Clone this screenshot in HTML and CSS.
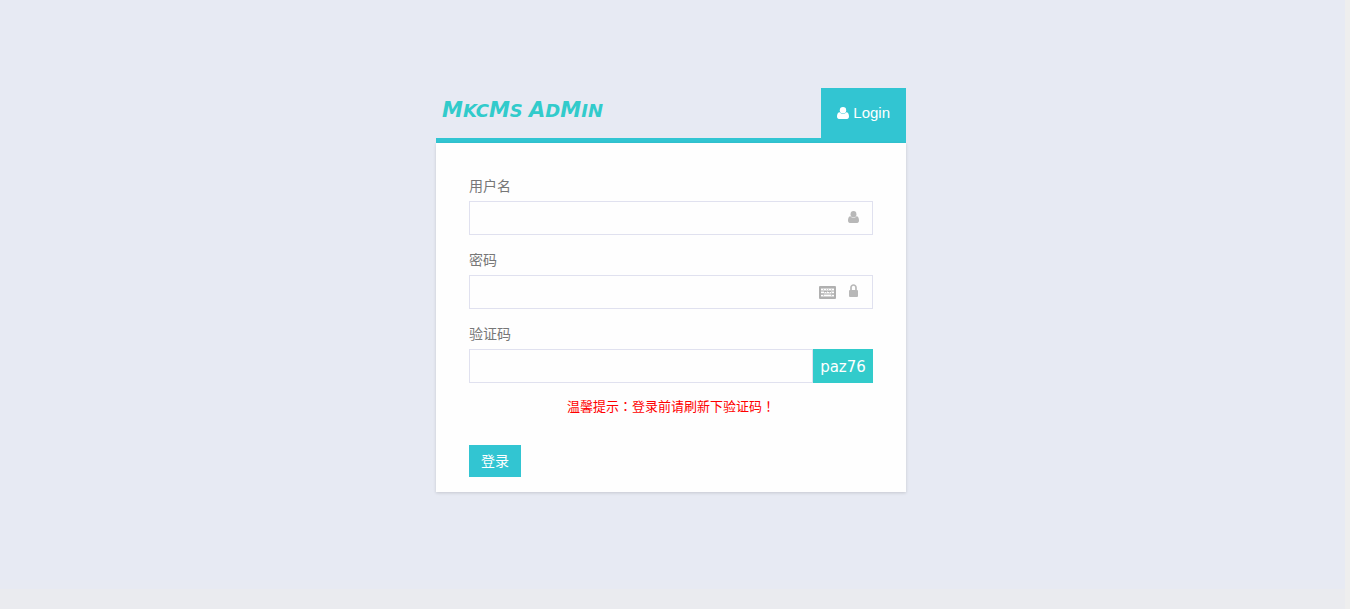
FILE: index.html
```
<!DOCTYPE html>
<html lang="zh-CN">
<head>
  <meta charset="UTF-8" />
  <meta name="viewport" content="width=device-width, initial-scale=1.0" />
  <title>MKCMS Admin</title>
  <link rel="stylesheet" href="styles.css">
</head>
<body>
  <div class="page">
    <main class="login">
      <header class="login-header">
        <h1 class="logo"><span class="tall">M</span>KC<span class="tall">M</span>S <span class="tall">A</span>D<span class="tall">M</span>IN</h1>
        <a class="tab" href="#login">
          <svg class="tab-icon" viewBox="0 0 12 12" fill="currentColor" aria-hidden="true"><circle cx="6" cy="3.200" r="3.200"/><path d="M2.800 5.200C.8 5.200 0 7.300 0 9.600 0 11.200.8 12 2 12h8c1.200 0 2-.8 2-2.400 0-2.300-.8-4.400-2.800-4.400C8.400 6.300 7.200 6.900 6 6.900S3.600 6.300 2.800 5.200z"/></svg>
          Login
        </a>
      </header>

      <form class="login-body" id="login">
        <div class="field">
          <label for="username">用户名</label>
          <div class="control">
            <input type="text" id="username" name="username" />
            <svg class="icon icon-user" viewBox="0 0 12 12" preserveAspectRatio="none" fill="currentColor" aria-hidden="true"><circle cx="6" cy="3.200" r="3.200"/><path d="M2.800 5.200C.8 5.200 0 7.300 0 9.600 0 11.200.8 12 2 12h8c1.200 0 2-.8 2-2.400 0-2.300-.8-4.400-2.800-4.400C8.400 6.300 7.200 6.900 6 6.900S3.600 6.300 2.800 5.200z"/></svg>
          </div>
        </div>

        <div class="field">
          <label for="password">密码</label>
          <div class="control">
            <input type="password" id="password" name="password" />
            <svg class="icon icon-keyboard" viewBox="0 0 17 13" aria-hidden="true">
              <rect width="17" height="13" rx="1" fill="#b0b0b0"/>
              <rect x="2" y="2" width="13" height="9" fill="#d2d2d2"/>
              <path d="M2 3.500h2m1 0h2m1 0h1m1 0h2m1 0h2M2 6.500h3m1 0h1m1 0h2m1 0h1m1 0h2M2 9.500h2m1 0h7m1 0h2" stroke="#fff"/>
              <path d="M5 5.500h3M9 5.500h3M2 8h3M12 8h3" stroke="#b0b0b0"/>
            </svg>
            <svg class="icon icon-lock" viewBox="0 0 9 13" aria-hidden="true"><path d="M2 7V3.500a2.500 2.500 0 0 1 5 0V7" fill="none" stroke="currentColor" stroke-width="1.700"/><rect y="6" width="9" height="7" rx="1" fill="currentColor"/></svg>
          </div>
        </div>

        <div class="field">
          <label for="code">验证码</label>
          <div class="control">
            <input type="text" id="code" name="code" />
            <button class="captcha" type="button">paz76</button>
          </div>
        </div>

        <p class="tip">温馨提示<span class="mark" lang="zh-TW">：</span>登录前请刷新下验证码<span class="mark" lang="zh-TW">！</span></p>
        <button class="submit" type="submit">登录</button>
      </form>
    </main>
  </div>
</body>
</html>
```
FILE: styles.css
```
* {
  box-sizing: border-box;
}

body {
  margin: 0;
  min-height: 100vh;
  padding: 0 5px 20px 0;
  background: linear-gradient(to left, #eee 5px, #eaebef 5px);
  font-family: "Liberation Sans", "Noto Sans CJK SC", sans-serif;
  font-size: 14px;
  line-height: 20px;
  color: #777;
}

.page {
  min-height: calc(100vh - 20px);
  padding: 88px 3px 88px 0;
  background: #e7eaf3;
}

.login {
  width: 100%;
  max-width: 470px;
  margin: 0 auto;
}

.login-header {
  display: flex;
  justify-content: space-between;
  height: 55px;
  border-bottom: 5px solid #32c5d2;
}

.logo {
  margin: 0;
  padding-left: 6px;
  font-family: "DejaVu Sans", sans-serif;
  font-size: 18px;
  font-style: italic;
  font-weight: bold;
  line-height: 44px;
  color: #32cbcb;
}

.logo .tall {
  font-size: 21px;
}

.tab {
  display: flex;
  align-items: center;
  gap: 4px;
  height: 50px;
  padding: 0 16px;
  background: #32c5d2;
  color: #fff;
  font-size: 15px;
  text-decoration: none;
}

.tab-icon {
  width: 12px;
  height: 12px;
}

.login-body {
  padding: 33px 33px 15px;
  background: #fefefe;
  box-shadow: 0 1px 3px rgba(0, 0, 0, 0.15);
}

.field {
  margin-bottom: 15px;
}

.field label {
  display: block;
  margin-bottom: 5px;
}

.control {
  position: relative;
  display: flex;
}

.control input {
  flex: 1;
  min-width: 0;
  height: 34px;
  padding: 6px 12px;
  border: 1px solid #e0e1ef;
  background: #fefefe;
  font: inherit;
}

.icon {
  position: absolute;
  color: #b8b8b8;
}

.icon-user {
  top: 10px;
  right: 14px;
  width: 11px;
  height: 12px;
}

.icon-keyboard {
  top: 11px;
  right: 37px;
  width: 17px;
  height: 13px;
}

.icon-lock {
  top: 9px;
  right: 15px;
  width: 9px;
  height: 13px;
}

.captcha {
  width: 60px;
  padding: 2px 0 0;
  border: none;
  background: #32cbcb;
  color: #fff;
  font-family: "DejaVu Sans", sans-serif;
  font-size: 15px;
  cursor: pointer;
}

.tip {
  margin: 0 0 30px;
  color: #f00;
  font-size: 13px;
  line-height: 16px;
  text-align: center;
}

/* keeps full-width punctuation centred in its cell */
.tip .mark {
  font-family: "Noto Sans CJK TC", sans-serif;
}

.submit {
  display: block;
  height: 32px;
  padding: 0 12px;
  border: none;
  background: #32c5d2;
  color: #fff;
  font: inherit;
  cursor: pointer;
}
```
